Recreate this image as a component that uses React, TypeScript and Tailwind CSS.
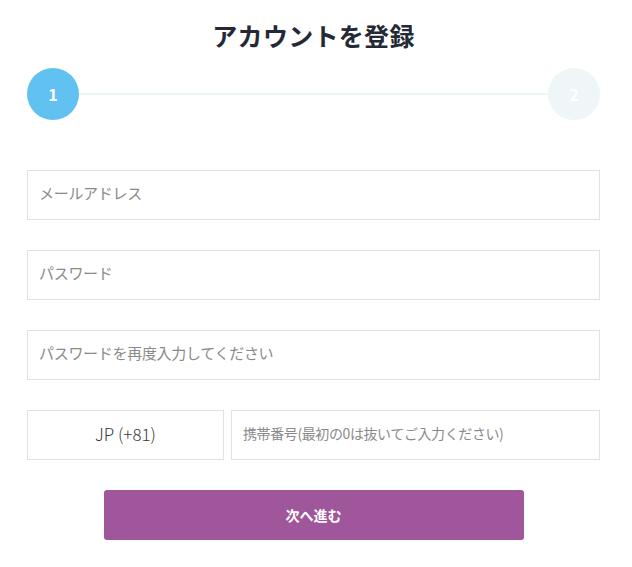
import React from 'react';

const font = { fontFamily: '"Noto Sans CJK JP", "Noto Sans", sans-serif' };

const Field: React.FC<{ placeholder: string; className?: string; small?: boolean }> = ({ placeholder, className, small }) => (
    <div className={`h-[50px] border border-[#e2e2e2] bg-white flex items-center px-[11px] pb-[3px] ${className ?? ''}`}>
        <span className={`${small ? 'text-[14px] tracking-[-0.4px]' : 'text-[15px] tracking-[-0.3px]'} text-[#8a8a8a]`}>{placeholder}</span>
    </div>
);

export default function App() {
    return (
        <div className="w-[632px] h-[567px] bg-white text-[#333]" style={font}>
            <div className="w-[573px] ml-[27px] pt-[17px]">
                <h1 className="text-center text-[25px] font-bold text-[#232a36] leading-[36px] tracking-[0.3px]">アカウントを登録</h1>

                {/* steps */}
                <div className="mt-[15px] flex items-center">
                    <div className="w-[52px] h-[52px] rounded-full bg-[#61c1f1] flex items-center justify-center text-white font-bold text-[16px]">1</div>
                    <div className="flex-1 h-[2px] bg-[#ecf6f9]" />
                    <div className="w-[52px] h-[52px] rounded-full bg-[#eef6f7] flex items-center justify-center text-white font-bold text-[16px]">2</div>
                </div>

                <div className="mt-[50px] flex flex-col gap-[30px]">
                    <Field placeholder="メールアドレス" />
                    <Field placeholder="パスワード" />
                    <Field placeholder="パスワードを再度入力してください" />
                    <div className="flex gap-[7px]">
                        <div className="w-[197px] h-[50px] border border-[#e2e2e2] flex items-center justify-center pb-[3px] text-[17px] font-light text-[#3a3a3a]">JP (+81)</div>
                        <Field placeholder="携帯番号(最初の0は抜いてご入力ください)" className="flex-1" small />
                    </div>
                </div>

                <div className="mt-[30px] flex justify-center">
                    <button className="w-[420px] h-[50px] rounded-[3px] bg-[#a0569b] text-white font-bold text-[14px]">次へ進む</button>
                </div>
            </div>
        </div>
    );
}
